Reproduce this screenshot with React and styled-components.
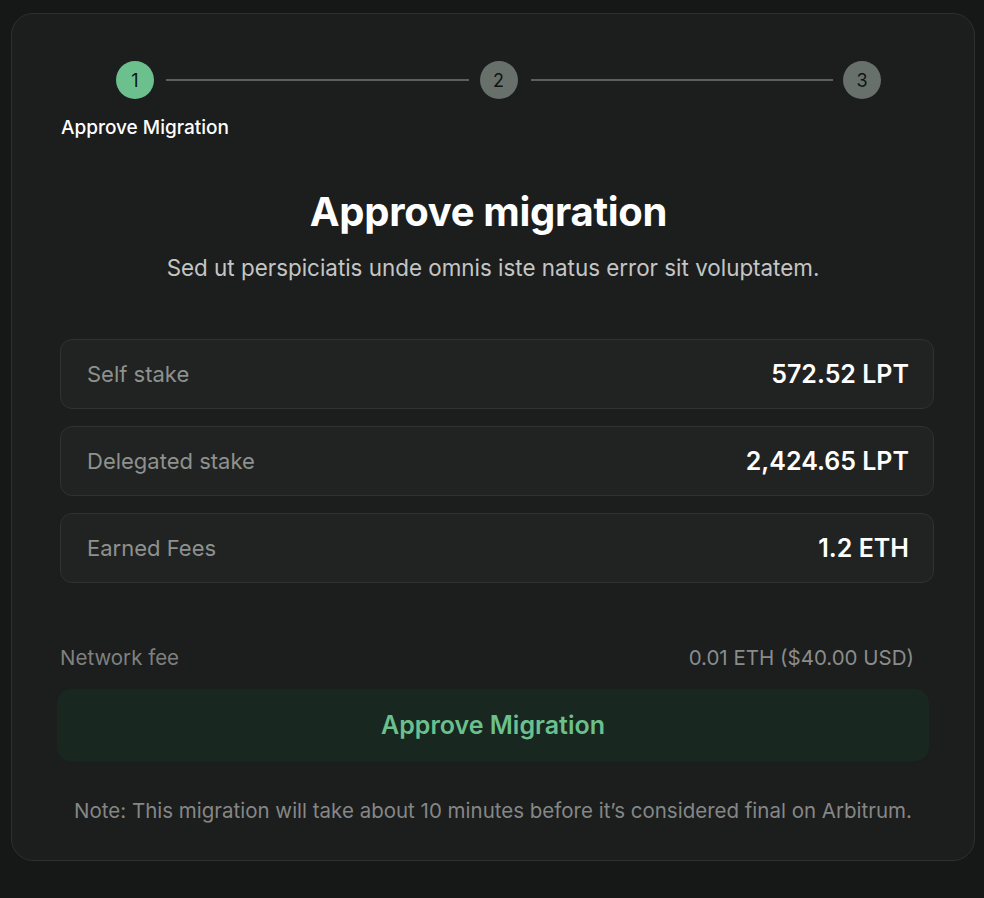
import React from 'react';
import styled, {createGlobalStyle} from 'styled-components';

const Global = createGlobalStyle`
  html, body {
    margin: 0;
    background: #161717;
    font-family: Inter, "Noto Sans", sans-serif;
    -webkit-font-smoothing: antialiased;
  }
`;

const Page = styled.div`
  padding: 13px 9px 38px 11px;
`;

const Card = styled.div`
  box-sizing: border-box;
  width: 964px;
  background: #1c1d1d;
  border: 1px solid #2e302f;
  border-radius: 22px;
  padding: 47px 43px 37px 43px;
  display: flex;
  flex-direction: column;
`;

const Stepper = styled.div`
  display: flex;
  align-items: center;
  padding: 0 50px 0 61px;
`;

const Circle = styled.div`
  width: 38px;
  height: 38px;
  flex: none;
  border-radius: 50%;
  background: ${p => (p.$active ? '#6bc08e' : '#68706c')};
  color: #111312;
  font-size: 18px;
  display: flex;
  align-items: center;
  justify-content: center;
`;

const Line = styled.div`
  flex: 1;
  height: 2px;
  background: #5b605d;
  margin: 0 ${p => p.$right}px 0 ${p => p.$left}px;
`;

const StepLabel = styled.div`
  margin: 17px 0 0 6px;
  font-size: 19px;
  font-weight: 500;
  line-height: 23px;
  color: #ffffff;
`;

const Title = styled.h1`
  margin: 49px 0 0;
  padding-right: 9px;
  text-align: center;
  font-size: 40px;
  font-weight: 700;
  line-height: 48px;
  color: #ffffff;
  letter-spacing: -0.3px;
`;

const Subtitle = styled.p`
  margin: 19px 0 0;
  text-align: center;
  font-size: 22.4px;
  line-height: 26px;
  color: #c4c6c5;
`;

const Rows = styled.div`
  margin: 58px -3px 0 5px;
  display: flex;
  flex-direction: column;
  gap: 17px;
`;

const Row = styled.div`
  box-sizing: border-box;
  height: 70px;
  display: flex;
  align-items: center;
  justify-content: space-between;
  padding: 0 24px 0 26px;
  background: #202321;
  border: 1px solid #2f3231;
  border-radius: 12px;
`;

const RowLabel = styled.span`
  font-size: 22px;
  color: #8e918f;
`;

const RowValue = styled.span`
  font-size: 25px;
  font-weight: 600;
  color: #ffffff;
`;

const FeeRow = styled.div`
  margin: 62px 17px 0 5px;
  display: flex;
  justify-content: space-between;
  font-size: 20.5px;
  line-height: 25px;
  color: #7f8180;
`;

const FeeValue = styled.span`
  color: #8a8c8b;
`;

const Button = styled.button`
  margin: 19px 2px 0 2px;
  height: 72px;
  flex: none;
  border: none;
  border-radius: 14px;
  background: #182720;
  color: #6bc08e;
  font-family: inherit;
  font-size: 25px;
  font-weight: 600;
  cursor: pointer;
`;

const Note = styled.p`
  margin: 37px 0 0;
  text-align: center;
  font-size: 20.5px;
  line-height: 25px;
  color: #858786;
`;

const rows = [
  ['Self stake', '572.52 LPT'],
  ['Delegated stake', '2,424.65 LPT'],
  ['Earned Fees', '1.2 ETH'],
];

export default function App() {
  return (
    <Page>
      <Global />
      <Card>
        <Stepper>
          <Circle $active>1</Circle>
          <Line $left={12} $right={11} />
          <Circle>2</Circle>
          <Line $left={13} $right={10} />
          <Circle>3</Circle>
        </Stepper>
        <StepLabel>Approve Migration</StepLabel>
        <Title>Approve migration</Title>
        <Subtitle>Sed ut perspiciatis unde omnis iste natus error sit voluptatem.</Subtitle>
        <Rows>
          {rows.map(([label, value]) => (
            <Row key={label}>
              <RowLabel>{label}</RowLabel>
              <RowValue>{value}</RowValue>
            </Row>
          ))}
        </Rows>
        <FeeRow>
          <span>Network fee</span>
          <FeeValue>0.01 ETH ($40.00 USD)</FeeValue>
        </FeeRow>
        <Button>Approve Migration</Button>
        <Note>Note: This migration will take about 10 minutes before it’s considered final on Arbitrum.</Note>
      </Card>
    </Page>
  );
}
